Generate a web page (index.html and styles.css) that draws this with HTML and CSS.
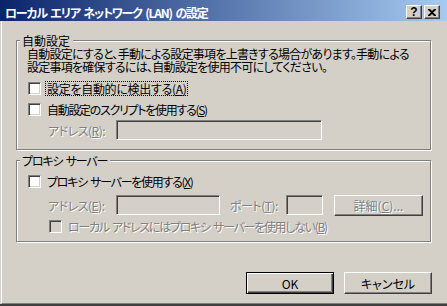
FILE: index.html
```html
<!DOCTYPE html>
<html lang="ja">
<head>
  <meta charset="UTF-8" />
  <title>ローカル エリア ネットワーク (LAN) の設定</title>
  <link rel="stylesheet" href="styles.css">
</head>
<body>

<div class="window">
  <div class="titlebar">
    <span class="title">ローカル エリア ネットワーク (LAN) の設定</span>
    <span class="cap-btn help">?</span>
    <span class="cap-btn close">
      <svg width="8" height="7" viewBox="0 0 8 7">
        <path d="M0 0h2l2 2 2-2h2v1L5 3.5 8 6v1H6L4 5 2 7H0V6l3-2.5L0 1z" fill="#000"/>
      </svg>
    </span>
  </div>

  <div class="body">
    <!-- auto config -->
    <div class="group">
      <span class="group-title">自動設定</span>
      <p class="desc">自動設定にすると、手動による設定事項を上書きする場合があります。手動による<br>設定事項を確保するには、自動設定を使用不可にしてください。</p>
      <div class="check-row first">
        <span class="check"></span>
        <span class="check-label focus">設定を自動的に検出する(<u>A</u>)</span>
      </div>
      <div class="check-row">
        <span class="check"></span>
        <span class="check-label">自動設定のスクリプトを使用する(<u>S</u>)</span>
      </div>
      <div class="field-row">
        <span class="field-label disabled">アドレス(<u>R</u>):</span>
        <span class="edit edit-url"></span>
      </div>
    </div>

    <!-- proxy -->
    <div class="group proxy">
      <span class="group-title">プロキシ サーバー</span>
      <div class="check-row first">
        <span class="check"></span>
        <span class="check-label">プロキシ サーバーを使用する(<u>X</u>)</span>
      </div>
      <div class="field-row">
        <span class="field-label disabled">アドレス(<u>E</u>):</span>
        <span class="edit edit-proxy"></span>
        <span class="field-label port-label disabled">ポート(<u>T</u>):</span>
        <span class="edit edit-port"></span>
        <button class="btn btn-detail"><span class="disabled">詳細(<u>C</u>)...</span></button>
      </div>
      <div class="check-row sub">
        <span class="check off"></span>
        <span class="check-label disabled">ローカル アドレスにはプロキシ サーバーを使用しない(<u>B</u>)</span>
      </div>
    </div>

    <div class="dialog-buttons">
      <button class="btn btn-default">OK</button>
      <button class="btn">キャンセル</button>
    </div>
  </div>
</div>

</body>
</html>
```

FILE: styles.css
```css
:root {
  --face: #d4d0c8;
  --shadow: #808080;
  --dark: #404040;
  --light: #ffffff;
}

* {
  box-sizing: border-box;
}

body {
  margin: 0;
  background: var(--face);
}

.window {
  width: 447px;
  height: 306px;
  display: flex;
  flex-direction: column;
  background: var(--face);
  border-bottom: 2px solid var(--dark);
  font-family: "Noto Sans CJK JP", sans-serif;
  font-size: 12px;
  font-feature-settings: "palt";
  word-spacing: 2px;
  color: #000;
}

/* title bar */
.titlebar {
  height: 21px;
  flex: none;
  display: flex;
  align-items: flex-start;
  background: linear-gradient(to right, #0a246a, #a6caf0);
}

.title {
  flex: 1;
  color: #fff;
  font-weight: bold;
  line-height: 13px;
  letter-spacing: -1.2px;
  padding: 6px 0 0 5px;
  white-space: nowrap;
}

.cap-btn {
  width: 16px;
  height: 14px;
  margin-top: 5px;
  display: flex;
  align-items: center;
  justify-content: center;
  background: var(--face);
  border: 1px solid;
  border-color: var(--light) var(--dark) var(--dark) var(--light);
  box-shadow: inset -1px -1px var(--shadow);
}

.help {
  margin-right: 2px;
  font-family: "Liberation Sans", sans-serif;
  font-weight: bold;
  font-size: 12px;
  line-height: 1;
}

.close {
  margin-right: 7px;
}

/* dialog body */
.body {
  flex: 1;
  margin-left: 1px;
  border-left: 1px solid var(--light);
  border-bottom: 1px solid var(--shadow);
  padding: 19px 16px 0 14px;
}

.group {
  border: 1px solid var(--shadow);
  box-shadow: 1px 1px 0 var(--light), inset 1px 1px 0 var(--light);
  padding: 0 0 9px 11px;
}

.group.proxy {
  margin-top: 10px;
  padding-bottom: 8px;
}

.group-title {
  display: block;
  width: fit-content;
  margin: -7px 0 0 -8px;
  padding: 0 3px 0 2px;
  background: var(--face);
  line-height: 13px;
  white-space: nowrap;
}

.proxy .group-title {
  letter-spacing: -1.2px;
}

.desc {
  margin: 0 0 0 -1px;
  line-height: 13px;
  letter-spacing: -0.75px;
  white-space: nowrap;
}

.check-row {
  display: flex;
  align-items: center;
  height: 13px;
  margin-top: 8px;
}

.check-row.first {
  margin-top: 9px;
}

.proxy .check-row.first {
  margin-top: 8px;
}

.check-row.sub {
  margin-top: 4px;
  padding-left: 21px;
}

.check {
  width: 13px;
  height: 13px;
  flex: none;
  background: #fff;
  border: 1px solid;
  border-color: var(--shadow) var(--light) var(--light) var(--shadow);
  box-shadow: inset 1px 1px var(--dark), inset -1px -1px var(--face);
}

.check.off {
  background: var(--face);
}

.check-label {
  margin-left: 4px;
  padding: 0 1px;
  border: 1px solid transparent;
  line-height: 13px;
  letter-spacing: -1.3px;
  white-space: nowrap;
}

.check-label.focus {
  border: 1px dotted #000;
  letter-spacing: -0.3px;
}

.field-row {
  display: flex;
  align-items: flex-start;
  margin-top: 4px;
  padding-left: 20px;
}

.proxy .field-row {
  margin-top: 7px;
}

.field-label {
  width: 68px;
  flex: none;
  padding-top: 4px;
  line-height: 13px;
  letter-spacing: -0.5px;
  white-space: nowrap;
}

.port-label {
  width: 56px;
  margin-left: 10px;
}

.disabled {
  color: var(--shadow);
  text-shadow: 1px 1px 0 var(--light);
}

.edit {
  height: 20px;
  flex: none;
  background: var(--face);
  border: 1px solid;
  border-color: var(--shadow) var(--light) var(--light) var(--shadow);
  box-shadow: inset 1px 1px var(--dark), inset -1px -1px var(--face);
}

.edit-url { width: 206px; }
.edit-proxy { width: 104px; }
.edit-port { width: 37px; }

/* push buttons */
.btn {
  display: flex;
  align-items: center;
  justify-content: center;
  padding: 0;
  background: var(--face);
  border: 1px solid;
  border-color: var(--light) var(--dark) var(--dark) var(--light);
  box-shadow: inset -1px -1px var(--shadow);
  font: inherit;
  color: #000;
  line-height: 13px;
}

.btn-detail {
  width: 89px;
  height: 21px;
  margin-left: 11px;
}

.btn-default {
  border: 1px solid #000;
  box-shadow: inset 1px 1px var(--light), inset -1px -1px var(--dark), inset -2px -2px var(--shadow);
}

.dialog-buttons {
  display: flex;
  justify-content: flex-end;
  gap: 10px;
  margin: 30px -1px 0 0;
}

.dialog-buttons .btn {
  width: 88px;
  height: 22px;
}
```
